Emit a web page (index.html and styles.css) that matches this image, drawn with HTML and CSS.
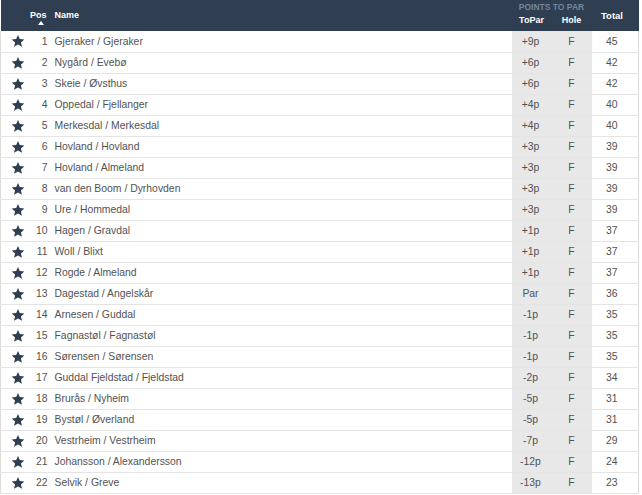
FILE: index.html
```html
<!DOCTYPE html>
<html>
<head>
<meta charset="utf-8">
<link rel="stylesheet" href="styles.css">
</head>
<body>
<table class="board">
<colgroup><col class="c-star"><col class="c-pos"><col class="c-name"><col class="c-par"><col class="c-hole"><col class="c-total"></colgroup>
<thead>
<tr class="h1">
<th rowspan="2"></th>
<th rowspan="2" class="hpos">Pos<span class="sort"></span></th>
<th rowspan="2" class="hname">Name</th>
<th colspan="2" class="hgroup">Points to par</th>
<th rowspan="2" class="htotal">Total</th>
</tr>
<tr class="h2"><th>ToPar</th><th>Hole</th></tr>
</thead>
<tbody id="rows">
<tr><td class="star"><svg viewBox="0 0 24 24"><path d="M12 1.5l3.1 7.2 7.8.6-5.9 5.1 1.8 7.6L12 17.9 5.2 22l1.8-7.6-5.9-5.1 7.8-.6z"/></svg></td><td class="pos">1</td><td class="name">Gjeraker / Gjeraker</td><td class="par">+9p</td><td class="hole">F</td><td class="total">45</td></tr>
<tr><td class="star"><svg viewBox="0 0 24 24"><path d="M12 1.5l3.1 7.2 7.8.6-5.9 5.1 1.8 7.6L12 17.9 5.2 22l1.8-7.6-5.9-5.1 7.8-.6z"/></svg></td><td class="pos">2</td><td class="name">Nygård / Evebø</td><td class="par">+6p</td><td class="hole">F</td><td class="total">42</td></tr>
<tr><td class="star"><svg viewBox="0 0 24 24"><path d="M12 1.5l3.1 7.2 7.8.6-5.9 5.1 1.8 7.6L12 17.9 5.2 22l1.8-7.6-5.9-5.1 7.8-.6z"/></svg></td><td class="pos">3</td><td class="name">Skeie / Øvsthus</td><td class="par">+6p</td><td class="hole">F</td><td class="total">42</td></tr>
<tr><td class="star"><svg viewBox="0 0 24 24"><path d="M12 1.5l3.1 7.2 7.8.6-5.9 5.1 1.8 7.6L12 17.9 5.2 22l1.8-7.6-5.9-5.1 7.8-.6z"/></svg></td><td class="pos">4</td><td class="name">Oppedal / Fjellanger</td><td class="par">+4p</td><td class="hole">F</td><td class="total">40</td></tr>
<tr><td class="star"><svg viewBox="0 0 24 24"><path d="M12 1.5l3.1 7.2 7.8.6-5.9 5.1 1.8 7.6L12 17.9 5.2 22l1.8-7.6-5.9-5.1 7.8-.6z"/></svg></td><td class="pos">5</td><td class="name">Merkesdal / Merkesdal</td><td class="par">+4p</td><td class="hole">F</td><td class="total">40</td></tr>
<tr><td class="star"><svg viewBox="0 0 24 24"><path d="M12 1.5l3.1 7.2 7.8.6-5.9 5.1 1.8 7.6L12 17.9 5.2 22l1.8-7.6-5.9-5.1 7.8-.6z"/></svg></td><td class="pos">6</td><td class="name">Hovland / Hovland</td><td class="par">+3p</td><td class="hole">F</td><td class="total">39</td></tr>
<tr><td class="star"><svg viewBox="0 0 24 24"><path d="M12 1.5l3.1 7.2 7.8.6-5.9 5.1 1.8 7.6L12 17.9 5.2 22l1.8-7.6-5.9-5.1 7.8-.6z"/></svg></td><td class="pos">7</td><td class="name">Hovland / Almeland</td><td class="par">+3p</td><td class="hole">F</td><td class="total">39</td></tr>
<tr><td class="star"><svg viewBox="0 0 24 24"><path d="M12 1.5l3.1 7.2 7.8.6-5.9 5.1 1.8 7.6L12 17.9 5.2 22l1.8-7.6-5.9-5.1 7.8-.6z"/></svg></td><td class="pos">8</td><td class="name">van den Boom / Dyrhovden</td><td class="par">+3p</td><td class="hole">F</td><td class="total">39</td></tr>
<tr><td class="star"><svg viewBox="0 0 24 24"><path d="M12 1.5l3.1 7.2 7.8.6-5.9 5.1 1.8 7.6L12 17.9 5.2 22l1.8-7.6-5.9-5.1 7.8-.6z"/></svg></td><td class="pos">9</td><td class="name">Ure / Hommedal</td><td class="par">+3p</td><td class="hole">F</td><td class="total">39</td></tr>
<tr><td class="star"><svg viewBox="0 0 24 24"><path d="M12 1.5l3.1 7.2 7.8.6-5.9 5.1 1.8 7.6L12 17.9 5.2 22l1.8-7.6-5.9-5.1 7.8-.6z"/></svg></td><td class="pos">10</td><td class="name">Hagen / Gravdal</td><td class="par">+1p</td><td class="hole">F</td><td class="total">37</td></tr>
<tr><td class="star"><svg viewBox="0 0 24 24"><path d="M12 1.5l3.1 7.2 7.8.6-5.9 5.1 1.8 7.6L12 17.9 5.2 22l1.8-7.6-5.9-5.1 7.8-.6z"/></svg></td><td class="pos">11</td><td class="name">Woll / Blixt</td><td class="par">+1p</td><td class="hole">F</td><td class="total">37</td></tr>
<tr><td class="star"><svg viewBox="0 0 24 24"><path d="M12 1.5l3.1 7.2 7.8.6-5.9 5.1 1.8 7.6L12 17.9 5.2 22l1.8-7.6-5.9-5.1 7.8-.6z"/></svg></td><td class="pos">12</td><td class="name">Rogde / Almeland</td><td class="par">+1p</td><td class="hole">F</td><td class="total">37</td></tr>
<tr><td class="star"><svg viewBox="0 0 24 24"><path d="M12 1.5l3.1 7.2 7.8.6-5.9 5.1 1.8 7.6L12 17.9 5.2 22l1.8-7.6-5.9-5.1 7.8-.6z"/></svg></td><td class="pos">13</td><td class="name">Dagestad / Angelskår</td><td class="par">Par</td><td class="hole">F</td><td class="total">36</td></tr>
<tr><td class="star"><svg viewBox="0 0 24 24"><path d="M12 1.5l3.1 7.2 7.8.6-5.9 5.1 1.8 7.6L12 17.9 5.2 22l1.8-7.6-5.9-5.1 7.8-.6z"/></svg></td><td class="pos">14</td><td class="name">Arnesen / Guddal</td><td class="par">-1p</td><td class="hole">F</td><td class="total">35</td></tr>
<tr><td class="star"><svg viewBox="0 0 24 24"><path d="M12 1.5l3.1 7.2 7.8.6-5.9 5.1 1.8 7.6L12 17.9 5.2 22l1.8-7.6-5.9-5.1 7.8-.6z"/></svg></td><td class="pos">15</td><td class="name">Fagnastøl / Fagnastøl</td><td class="par">-1p</td><td class="hole">F</td><td class="total">35</td></tr>
<tr><td class="star"><svg viewBox="0 0 24 24"><path d="M12 1.5l3.1 7.2 7.8.6-5.9 5.1 1.8 7.6L12 17.9 5.2 22l1.8-7.6-5.9-5.1 7.8-.6z"/></svg></td><td class="pos">16</td><td class="name">Sørensen / Sørensen</td><td class="par">-1p</td><td class="hole">F</td><td class="total">35</td></tr>
<tr><td class="star"><svg viewBox="0 0 24 24"><path d="M12 1.5l3.1 7.2 7.8.6-5.9 5.1 1.8 7.6L12 17.9 5.2 22l1.8-7.6-5.9-5.1 7.8-.6z"/></svg></td><td class="pos">17</td><td class="name">Guddal Fjeldstad / Fjeldstad</td><td class="par">-2p</td><td class="hole">F</td><td class="total">34</td></tr>
<tr><td class="star"><svg viewBox="0 0 24 24"><path d="M12 1.5l3.1 7.2 7.8.6-5.9 5.1 1.8 7.6L12 17.9 5.2 22l1.8-7.6-5.9-5.1 7.8-.6z"/></svg></td><td class="pos">18</td><td class="name">Brurås / Nyheim</td><td class="par">-5p</td><td class="hole">F</td><td class="total">31</td></tr>
<tr><td class="star"><svg viewBox="0 0 24 24"><path d="M12 1.5l3.1 7.2 7.8.6-5.9 5.1 1.8 7.6L12 17.9 5.2 22l1.8-7.6-5.9-5.1 7.8-.6z"/></svg></td><td class="pos">19</td><td class="name">Bystøl / Øverland</td><td class="par">-5p</td><td class="hole">F</td><td class="total">31</td></tr>
<tr><td class="star"><svg viewBox="0 0 24 24"><path d="M12 1.5l3.1 7.2 7.8.6-5.9 5.1 1.8 7.6L12 17.9 5.2 22l1.8-7.6-5.9-5.1 7.8-.6z"/></svg></td><td class="pos">20</td><td class="name">Vestrheim / Vestrheim</td><td class="par">-7p</td><td class="hole">F</td><td class="total">29</td></tr>
<tr><td class="star"><svg viewBox="0 0 24 24"><path d="M12 1.5l3.1 7.2 7.8.6-5.9 5.1 1.8 7.6L12 17.9 5.2 22l1.8-7.6-5.9-5.1 7.8-.6z"/></svg></td><td class="pos">21</td><td class="name">Johansson / Alexandersson</td><td class="par">-12p</td><td class="hole">F</td><td class="total">24</td></tr>
<tr><td class="star"><svg viewBox="0 0 24 24"><path d="M12 1.5l3.1 7.2 7.8.6-5.9 5.1 1.8 7.6L12 17.9 5.2 22l1.8-7.6-5.9-5.1 7.8-.6z"/></svg></td><td class="pos">22</td><td class="name">Selvik / Greve</td><td class="par">-13p</td><td class="hole">F</td><td class="total">23</td></tr>
</tbody>
</table>
</body>
</html>
```
FILE: styles.css
```css
html, body { margin: 0; padding: 0; background: #fff; }
body { font-family: "Liberation Sans", Arial, sans-serif; }
.board {
  width: 639px;
  border-collapse: collapse;
  table-layout: fixed;
  font-size: 10.4px;
  color: #525252;
}
.c-star { width: 28px; }
.c-pos { width: 20px; }
.c-par { width: 40px; }
.c-hole { width: 40px; }
.c-total { width: 47px; }
thead th {
  background: #2f3e50;
  color: #fff;
  font-weight: bold;
  font-size: 9px;
  padding: 0;
}
.h1 { height: 13px; }
.h2 { height: 18px; }
.hpos { text-align: right; padding-right: 2px; vertical-align: top; padding-top: 10px; position: relative; }
.sort {
  position: absolute; left: 9px; top: 21px;
  width: 0; height: 0;
  border-left: 3px solid transparent; border-right: 3px solid transparent;
  border-bottom: 4px solid #fff;
}
.hname { text-align: left; padding-left: 6px; vertical-align: top; padding-top: 10px; }
.hgroup { color: #74879c; font-weight: bold; font-size: 8.5px; text-transform: uppercase; vertical-align: bottom; text-align: center; line-height: 11px; }
.h2 th { text-align: center; vertical-align: top; padding-top: 2px; }
.htotal { text-align: center; vertical-align: middle; font-size: 9.5px; padding-right: 6px; }
tbody tr { height: 21px; }
tbody td {
  border-bottom: 1px solid #e4e4e4;
  padding: 0;
  height: 20px;
  vertical-align: middle;
}
tbody td:first-child { border-left: 1px solid #dcdcdc; }
tbody td:last-child { border-right: 1px solid #dcdcdc; }
.star svg { width: 14px; height: 14px; fill: #2f3e50; display: block; margin-left: 10px; }
.pos { text-align: right; padding-right: 1px; }
.name { padding-left: 6px; }
.par, .hole { background: #e8e8e8; text-align: center; }
.par { padding-right: 2px; }
.total { text-align: center; padding-right: 6px; }
```
